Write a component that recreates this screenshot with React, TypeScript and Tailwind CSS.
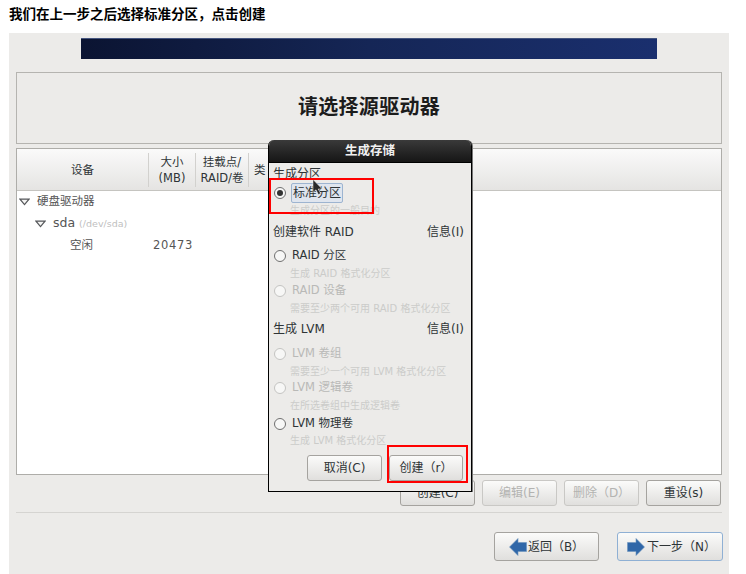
import React from 'react';

const FONT = 'font-["DejaVu_Sans","Noto_Sans_CJK_SC",sans-serif]';

const Triangle = () => (
  <svg width="11" height="8" viewBox="0 0 11 8" className="shrink-0">
    <path d="M1 1.2 H10 L5.5 6.6 Z" fill="#f4f4f3" stroke="#55575a" strokeWidth="1.2" />
  </svg>
);

const Radio = ({ checked, disabled }: { checked?: boolean; disabled?: boolean }) => (
  <span
    className={`flex h-[12px] w-[12px] shrink-0 items-center justify-center rounded-full border bg-[#f7f7f6] ${
      disabled ? 'border-[#c4c4c2]' : 'border-[#6f6f6f]'
    }`}
  >
    {checked && <span className="h-[6px] w-[6px] rounded-full bg-[#333]" />}
  </span>
);

const RadioItem = ({
  label,
  hint,
  disabled,
  checked,
  height = 35,
}: {
  label: string;
  hint: string;
  disabled?: boolean;
  checked?: boolean;
  height?: number;
}) => (
  <div className="flex flex-col" style={{ height }}>
    <div className="flex h-[18px] items-center gap-[5px] pl-[5px]">
      <Radio checked={checked} disabled={disabled} />
      <span
        className={
          checked
            ? 'rounded-[2px] border border-[#9db4d0] bg-[#dfe5ee] px-[1px] text-[12px] leading-[18px] text-[#2e3436]'
            : `pl-[1px] text-[11.5px] ${disabled ? 'text-[#b9b9b7]' : 'text-[#2e3436]'}`
        }
      >
        {label}
      </span>
    </div>
    <div className="mt-[1px] pl-[21px] text-[10px] leading-[15px] whitespace-nowrap text-[#cbcbc9]">{hint}</div>
  </div>
);

const SectionTitle = ({ title, info }: { title: string; info?: boolean }) => (
  <div className="flex h-[18px] items-center justify-between pr-[7px] pl-[4px] text-[12px] leading-[16px] text-[#2e3436]">
    <span>{title}</span>
    {info && <span>信息(I)</span>}
  </div>
);

const GtkButton = ({
  className,
  disabled,
  children,
}: {
  className: string;
  disabled?: boolean;
  children: React.ReactNode;
}) => (
  <div
    className={`flex items-center justify-center rounded-[3px] border bg-gradient-to-b from-[#fbfbfa] to-[#e0dfdd] text-[12px] whitespace-nowrap ${
      disabled ? 'border-[#c9c8c5] text-[#b3b3b1]' : 'border-[#a5a39f] text-[#2e3436]'
    } ${className}`}
  >
    {children}
  </div>
);

const Arrow = ({ left }: { left?: boolean }) => (
  <svg width="18" height="18" viewBox="0 0 18 18" className={left ? 'shrink-0' : 'shrink-0 -scale-x-100'}>
    <path d="M0.5 9 L9 0.5 V4.5 H17.5 V13.5 H9 V17.5 Z" fill="#3067a8" stroke="#6c93bd" strokeWidth="0.6" />
  </svg>
);

const StorageDialog = () => (
  <div className="absolute top-[140px] left-[268px] h-[352px] w-[204px] overflow-hidden rounded-t-[6px] border-x border-b border-black bg-[#ecebe9] shadow-[1px_0_0_#777]">
    <div className="flex h-[23px] items-center justify-center border-b border-black bg-gradient-to-b from-[#3a3a3a] to-[#161616] text-[12.5px] font-bold text-[#f0f0f0]">
      生成存储
    </div>
    <div className="flex flex-col pt-[2px]">
      <SectionTitle title="生成分区" />
      <div className="mt-[1px]">
        <RadioItem label="标准分区" hint="生成分区的一般目的" checked height={39} />
      </div>
      <SectionTitle title="创建软件 RAID" info />
      <div className="mt-[6px]">
        <RadioItem label="RAID 分区" hint="生成 RAID 格式化分区" height={35} />
        <RadioItem label="RAID 设备" hint="需要至少两个可用 RAID 格式化分区" disabled height={38} />
      </div>
      <SectionTitle title="生成 LVM" info />
      <div className="mt-[7px]">
        <RadioItem label="LVM 卷组" hint="需要至少一个可用 LVM 格式化分区" disabled height={34} />
        <RadioItem label="LVM 逻辑卷" hint="在所选卷组中生成逻辑卷" disabled height={36} />
        <RadioItem label="LVM 物理卷" hint="生成 LVM 格式化分区" height={32} />
      </div>
      <div className="mt-[8px] flex justify-end gap-[7px] pr-[8px]">
        <GtkButton className="h-[26px] w-[75px]">取消(C)</GtkButton>
        <GtkButton className="h-[26px] w-[74px]">创建（r）</GtkButton>
      </div>
    </div>
  </div>
);

export default function App() {
  return (
    <div className={`relative h-[574px] w-[746px] overflow-hidden bg-white ${FONT}`}>
      <div className="flex h-[33px] items-start pt-[6px] pl-[9px] text-[13.5px] leading-[17px] font-bold text-black">
        我们在上一步之后选择标准分区，点击创建
      </div>

      <div className="ml-[9px] flex h-[541px] w-[720px] flex-col bg-[#ecebe9] px-[7px] pt-[5px] text-[#2e3436]">
        <div className="ml-[65px] h-[21px] w-[576px] border-t border-[#45557f] bg-gradient-to-r from-[#0b1432] via-[#152656] to-[#1a2f6e]" />

        <div className="mt-[13px] flex h-[72px] items-center justify-center border border-[#b5b4b0] pb-[2px] text-[20px] font-bold tracking-[0.3px] text-[#1c1c1c]">
          请选择源驱动器
        </div>

        <div className="mt-[4px] flex h-[327px] flex-col border border-[#aeada9] bg-white">
          <div className="flex h-[42px] items-center border-b border-[#c5c4c0] bg-gradient-to-b from-[#fafafa] to-[#e5e4e2] pt-[1px] text-center text-[11.5px] leading-[16px]">
            <div className="w-[131px]">设备</div>
            <div className="flex h-[34px] w-[47px] items-center justify-center border-l border-[#d2d1ce]">
              大小<br />(MB)
            </div>
            <div className="flex h-[34px] w-[54px] items-center justify-center border-x border-[#d2d1ce] text-[11.5px]">
              挂载点/<br />RAID/卷
            </div>
            <div className="ml-[5px] text-left">类</div>
          </div>
          <div className="flex flex-col pt-[1px] text-[#555]">
            <div className="flex h-[20px] items-center gap-[7px] pl-[2px] text-[11.5px]">
              <Triangle />
              <span>硬盘驱动器</span>
            </div>
            <div className="flex h-[23px] items-center gap-[7px] pl-[18px] text-[12.5px]">
              <Triangle />
              <span>
                sda <span className="text-[9.5px] text-[#c0c0c0]">(/dev/sda)</span>
              </span>
            </div>
            <div className="flex h-[22px] items-center text-[11.5px]">
              <span className="w-[136px] pl-[53px]">空闲</span>
              <span className="tracking-[0.7px]">20473</span>
            </div>
          </div>
        </div>

        <div className="mt-[5px] flex justify-end gap-[7px] pr-[1px]">
          <GtkButton className="h-[26px] w-[75px]">创建(C)</GtkButton>
          <GtkButton className="h-[26px] w-[75px]" disabled>编辑(E)</GtkButton>
          <GtkButton className="h-[26px] w-[75px]" disabled>删除（D）</GtkButton>
          <GtkButton className="h-[26px] w-[75px]">重设(s)</GtkButton>
        </div>

        <div className="mt-[6px] h-px bg-[#d5d4d1]" />

        <div className="mt-[19px] -mr-[1px] flex justify-end gap-[18px]">
          <GtkButton className="h-[29px] w-[105px] gap-[1px]">
            <Arrow left />
            返回（B）
          </GtkButton>
          <GtkButton className="h-[29px] w-[106px] gap-[2px] pl-[3px] !border-[#8fb0d4]">
            <Arrow />
            下一步（N）
          </GtkButton>
        </div>
      </div>

      <StorageDialog />

      <svg width="12" height="17" viewBox="0 0 12 17" className="absolute top-[179px] left-[312px]">
        <path d="M1 0.5 V13.5 L4 10.8 L6.4 15.5 L8.6 14.4 L6.2 10 H10.2 Z" fill="#2a2a2a" stroke="#eee" strokeWidth="0.5" />
      </svg>

      <div className="absolute top-[178px] left-[269px] h-[36px] w-[105px] border-2 border-[#f00]" />
      <div className="absolute top-[445px] left-[387px] h-[38px] w-[81px] border-2 border-[#f00]" />
    </div>
  );
}
